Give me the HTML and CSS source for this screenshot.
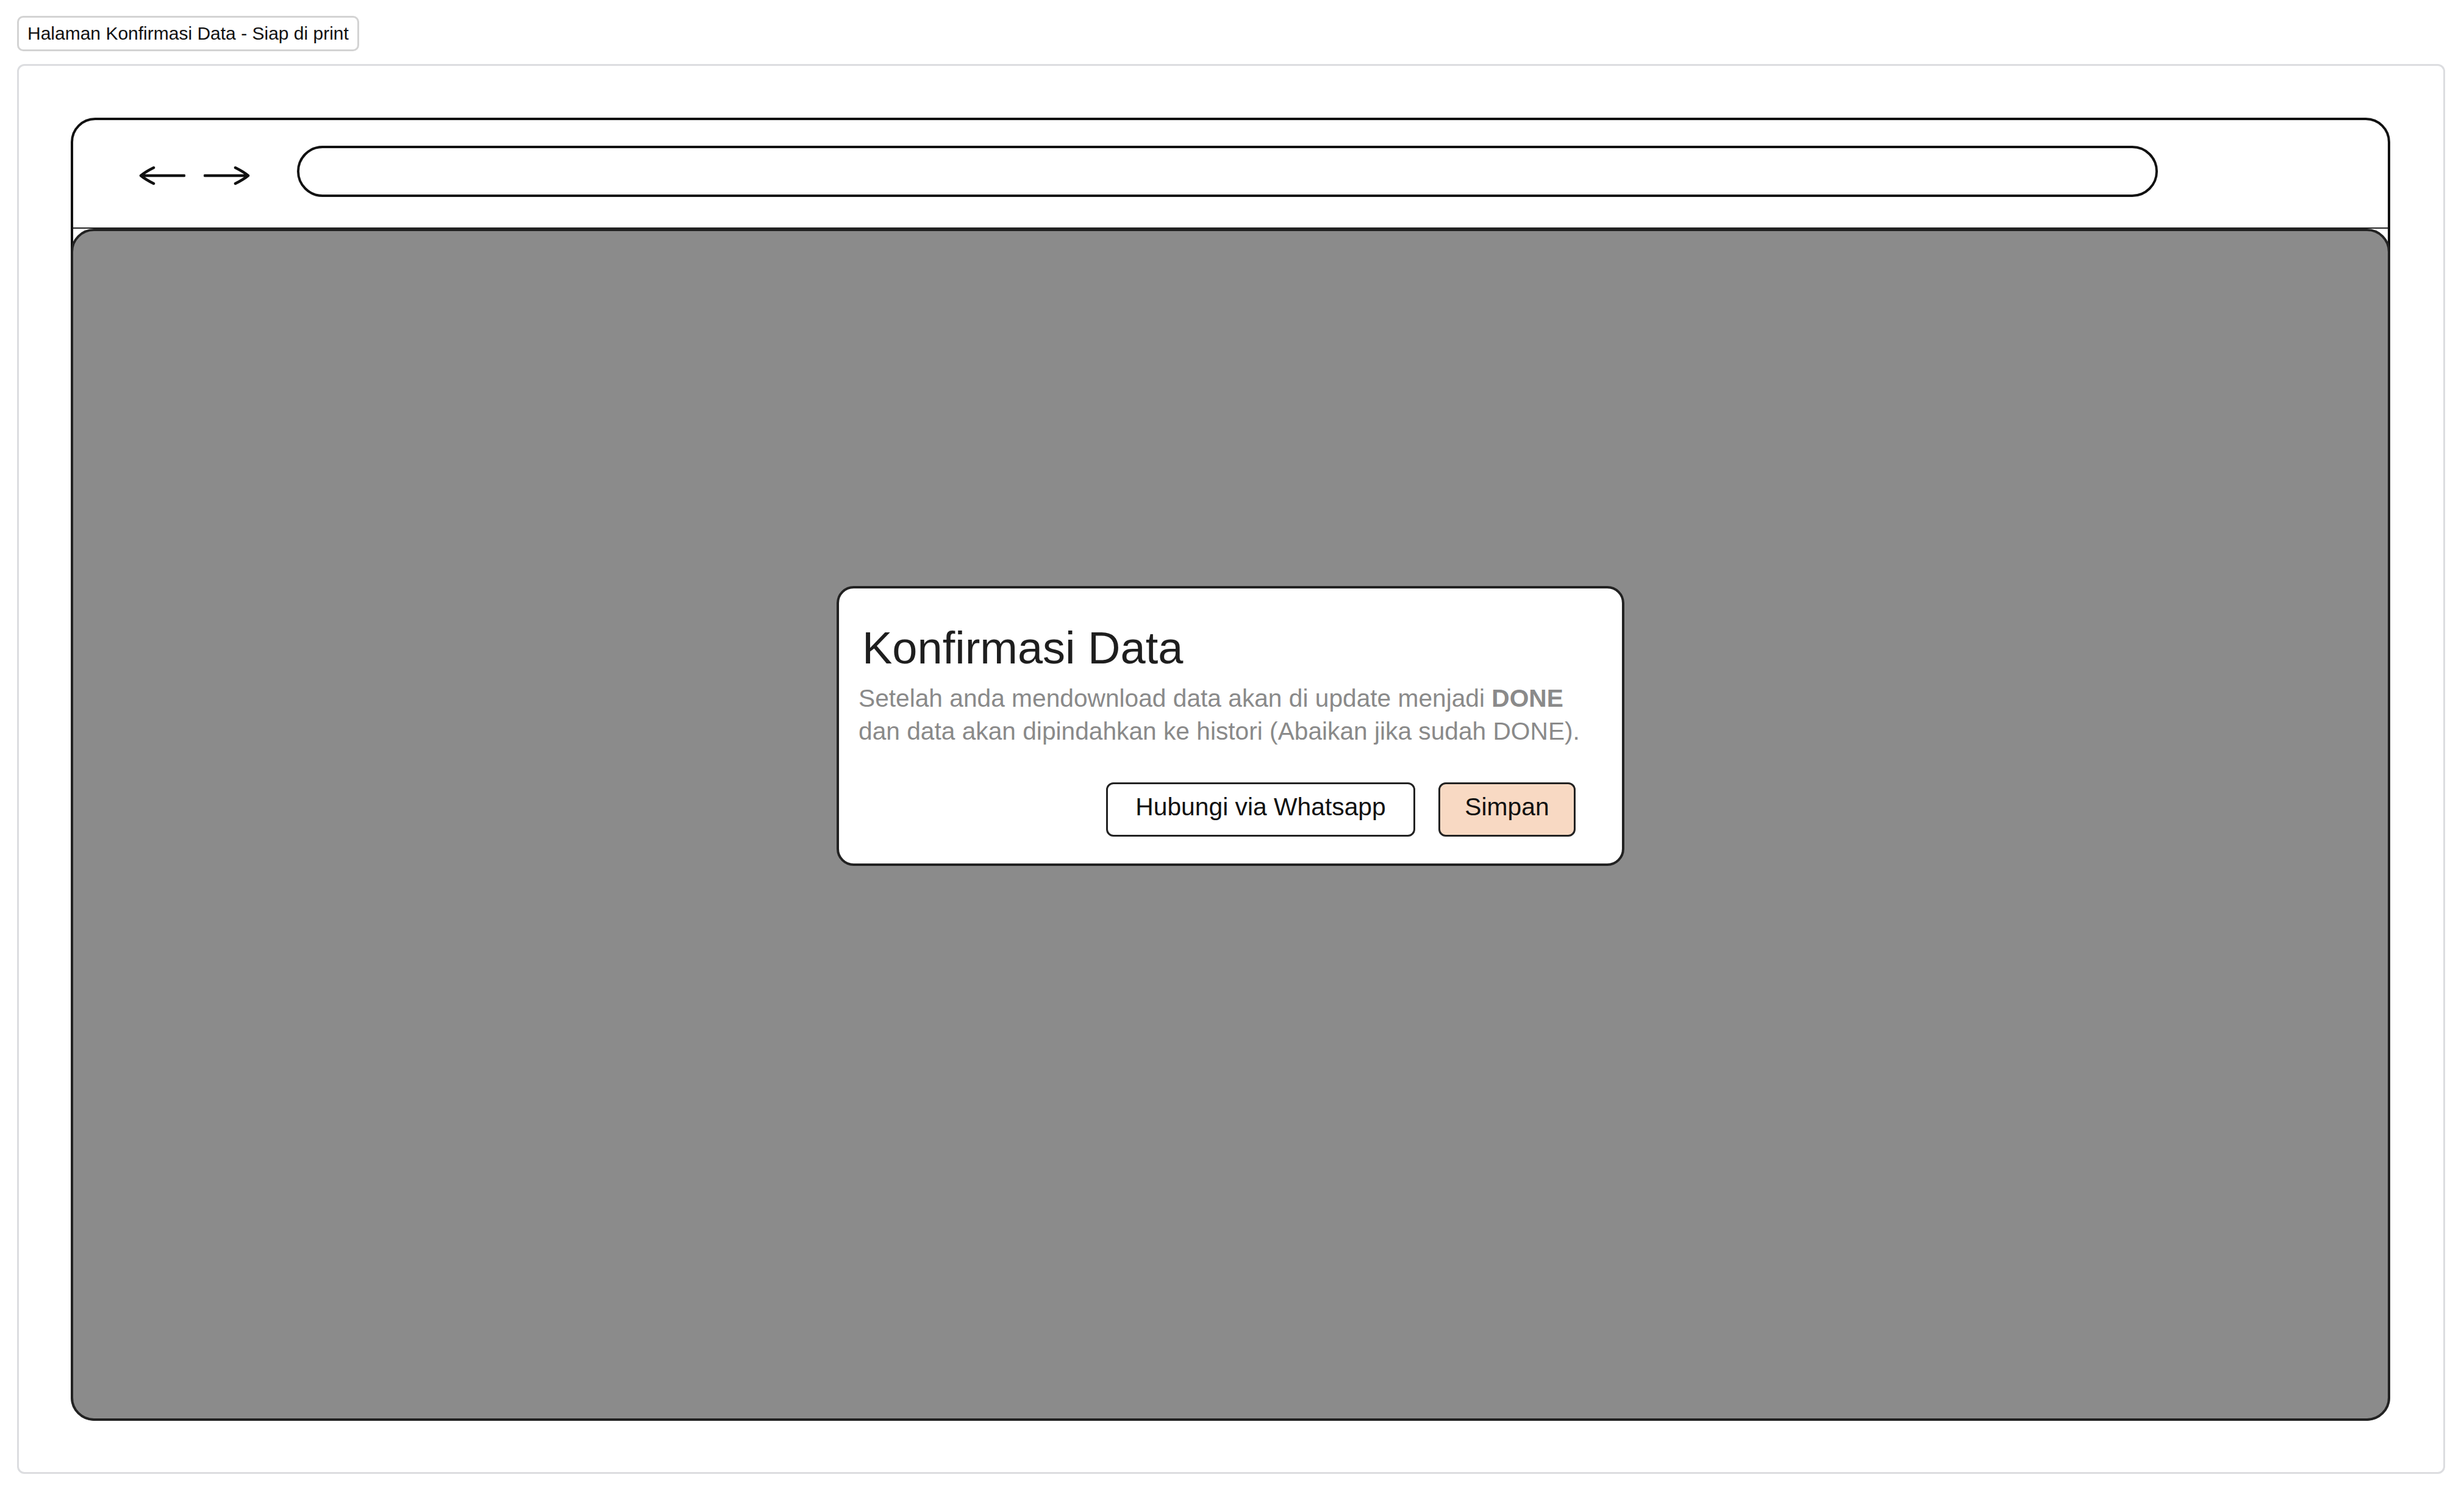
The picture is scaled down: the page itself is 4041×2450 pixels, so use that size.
FILE: index.html
```html
<!DOCTYPE html>
<html lang="id">
<head>
<meta charset="utf-8">
<title>Halaman Konfirmasi Data - Siap di print</title>
<link rel="stylesheet" href="styles.css">
</head>
<body>
  <div class="label">Halaman Konfirmasi Data - Siap di print</div>
  <div class="stage">
    <div class="frame">
      <div class="header">
        <div class="nav">
          <svg class="arrow" width="76" height="32" viewBox="0 0 76 32">
            <path d="M74 16 H3 M24 3 Q10 10 3 16 Q10 22 24 29" fill="none" stroke="#111" stroke-width="4.5" stroke-linecap="round" stroke-linejoin="round"/>
          </svg>
          <svg class="arrow" width="76" height="32" viewBox="0 0 76 32">
            <path d="M2 16 H73 M52 3 Q66 10 73 16 Q66 22 52 29" fill="none" stroke="#111" stroke-width="4.5" stroke-linecap="round" stroke-linejoin="round"/>
          </svg>
        </div>
        <div class="address"></div>
      </div>
      <div class="content">
        <div class="modal">
          <h1 class="modal-title">Konfirmasi Data</h1>
          <p class="modal-text">Setelah anda mendownload data akan di update menjadi <b>DONE</b><br>dan data akan dipindahkan ke histori (Abaikan jika sudah DONE).</p>
          <div class="actions">
            <button class="btn btn-wa">Hubungi via Whatsapp</button>
            <button class="btn btn-save">Simpan</button>
          </div>
        </div>
      </div>
    </div>
  </div>
</body>
</html>
```

FILE: styles.css
```css
* { box-sizing: border-box; }

body {
  margin: 0;
  background: #ffffff;
  font-family: "Liberation Sans", Arial, sans-serif;
}

.label {
  display: inline-block;
  margin: 26px 0 0 28px;
  height: 58px;
  padding: 0 14px;
  border: 3px solid #d3d3d3;
  border-radius: 10px;
  font-size: 30px;
  line-height: 52px;
  color: #111;
  background: #fff;
}

.stage {
  margin: 21px 31px 0 28px;
  padding: 85px 87px 84px 85px;
  border: 3px solid #dcdde0;
  border-radius: 12px;
}

.frame {
  height: 2137px;
  display: flex;
  flex-direction: column;
  border: 4px solid #111;
  border-radius: 40px;
  background: #fff;
}

.header {
  height: 178px;
  flex: none;
  display: flex;
  align-items: center;
  padding: 0 377px 0 108px;
  border-bottom: 2px solid #222;
}

.nav {
  display: flex;
  gap: 30px;
  margin-top: 6px;
}

.arrow { display: block; }

.address {
  flex: 1;
  margin-left: 77px;
  height: 84px;
  margin-top: -8px;
  border: 4px solid #111;
  border-radius: 42px;
}

.content {
  flex: 1;
  margin: 0 -4px -4px -4px;
  border: 4px solid #222;
  border-radius: 38px;
  background: #8b8b8b;
  display: flex;
  justify-content: center;
  align-items: flex-start;
  padding-top: 582px;
}

.modal {
  width: 1292px;
  border: 4px solid #222;
  border-radius: 28px;
  background: #fff;
  padding: 61px 20px 44px 32px;
}

.modal-title {
  margin: 0 0 18px 0;
  padding-left: 6px;
  font-size: 74px;
  line-height: 74px;
  font-weight: 400;
  color: #1e1e1e;
}

.modal-text {
  margin: 0;
  font-size: 40.7px;
  line-height: 54px;
  color: #8a8a8a;
  white-space: nowrap;
}

.modal-text b { font-weight: 700; }

.actions {
  display: flex;
  justify-content: flex-end;
  gap: 38px;
  margin: 57px 56px 0 0;
}

.btn {
  height: 89px;
  border: 3.5px solid #222;
  border-radius: 12px;
  font-family: "Liberation Sans", Arial, sans-serif;
  font-size: 40.8px;
  color: #111;
  display: flex;
  align-items: center;
  justify-content: center;
  padding: 0 0 8px 0;
}

.btn-wa { width: 507px; background: #fff; }
.btn-save { width: 225px; background: #f8d9c3; }
```
